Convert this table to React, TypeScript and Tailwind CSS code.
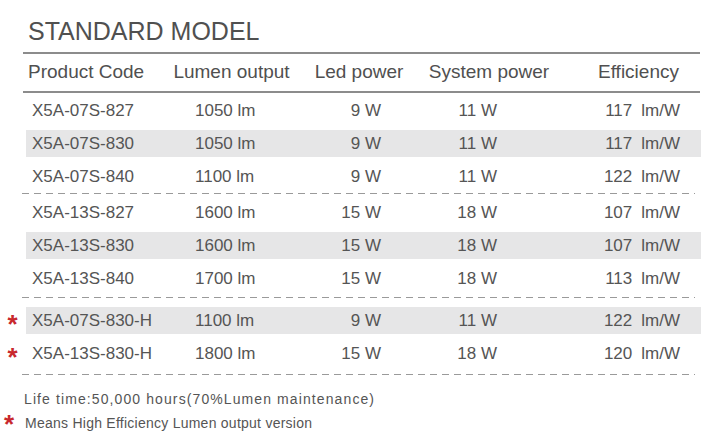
import React from 'react';

type Row = {
  code: string;
  lumen: string;
  led: string;
  sys: string;
  eff: string;
  shaded?: boolean;
  star?: boolean;
};

const groups: Row[][] = [
  [
    { code: 'X5A-07S-827', lumen: '1050 lm', led: '9 W', sys: '11 W', eff: '117' },
    { code: 'X5A-07S-830', lumen: '1050 lm', led: '9 W', sys: '11 W', eff: '117', shaded: true },
    { code: 'X5A-07S-840', lumen: '1100 lm', led: '9 W', sys: '11 W', eff: '122' },
  ],
  [
    { code: 'X5A-13S-827', lumen: '1600 lm', led: '15 W', sys: '18 W', eff: '107' },
    { code: 'X5A-13S-830', lumen: '1600 lm', led: '15 W', sys: '18 W', eff: '107', shaded: true },
    { code: 'X5A-13S-840', lumen: '1700 lm', led: '15 W', sys: '18 W', eff: '113' },
  ],
  [
    { code: 'X5A-07S-830-H', lumen: '1100 lm', led: '9 W', sys: '11 W', eff: '122', shaded: true, star: true },
    { code: 'X5A-13S-830-H', lumen: '1800 lm', led: '15 W', sys: '18 W', eff: '120', star: true },
  ],
];

// group paddings tuned to the picture
const groupPad = ['pt-[1px]', 'pt-[2px] pb-[2px]', 'pt-[6px] pb-[4px]'];

const Star = ({ className = '' }: { className?: string }) => (
  <span className={`font-bold text-[26px] leading-none text-[#c8282d] ${className}`}>*</span>
);

const Dashed = () => (
  <div className="ml-[22px] w-[673px] h-px bg-[repeating-linear-gradient(90deg,#9a9a9a_0_7px,transparent_7px_12px)]" />
);

const DataRow = ({ row }: { row: Row }) => (
  <div className="flex h-[33px] items-center">
    <div className="w-[23px] flex justify-center pl-[2px]">
      {row.star && <Star className="translate-y-[3px]" />}
    </div>
    <div
      className={`flex-1 ml-[3px] mr-[7px] h-[27px] grid grid-cols-[134px_143px_112px_148px_138px] items-center text-[17px] text-[#555555] ${
        row.shaded ? 'bg-[#e6e6e7]' : ''
      }`}
    >
      <div className="pl-[6px]">{row.code}</div>
      <div className="pl-[35px]">{row.lumen}</div>
      <div className="pr-[34px] text-right">{row.led}</div>
      <div className="pr-[66px] text-right">{row.sys}</div>
      <div className="pr-[21px] text-right">
        <span>{row.eff}</span>
        <span className="ml-[9px]">lm/W</span>
      </div>
    </div>
  </div>
);

export default function App() {
  return (
    <div className="w-[708px] h-[441px] bg-white pt-[16px] font-['Liberation_Sans',Arial,sans-serif] overflow-hidden">
      {/* Title */}
      <div className="ml-[23px] pl-[5px] text-[25px] leading-[30px] text-[#505050]">STANDARD MODEL</div>
      <div className="ml-[23px] mr-[8px] mt-[6px] h-[2px] bg-[#8c8c8c]" />

      {/* Header */}
      <div className="ml-[23px] mr-[8px] h-[37px] grid grid-cols-[137px_143px_112px_148px_137px] items-center text-[19px] text-[#505050]">
        <div className="pl-[5px]">Product Code</div>
        <div className="text-center">Lumen output</div>
        <div className="text-center">Led power</div>
        <div className="text-center">System power</div>
        <div className="pl-[14px] text-center">Efficiency</div>
      </div>
      <div className="ml-[23px] mr-[8px] h-[2px] bg-[#8c8c8c]" />

      {/* Rows */}
      {groups.map((g, i) => (
        <React.Fragment key={i}>
          <div className={groupPad[i]}>
            {g.map((r) => (
              <DataRow key={r.code} row={r} />
            ))}
          </div>
          <Dashed />
        </React.Fragment>
      ))}

      {/* Notes */}
      <div className="mt-[12px] ml-[24px] text-[14px] leading-[24px] tracking-[1.1px] text-[#555555]">
        Life time:50,000 hours(70%Lumen maintenance)
      </div>
      <div className="flex h-[24px] items-center">
        <div className="w-[23px] flex justify-center pr-[5px]">
          <Star className="translate-y-[1px]" />
        </div>
        <div className="pl-[2px] text-[14px] tracking-[0.25px] text-[#555555]">
          Means High Efficiency Lumen output version
        </div>
      </div>
    </div>
  );
}
